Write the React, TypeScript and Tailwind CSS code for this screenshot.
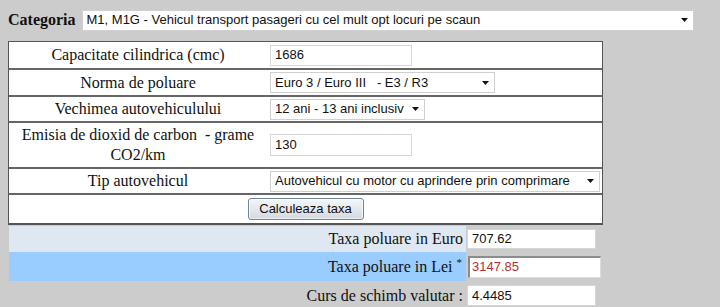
import React from "react";

const Arrow = () => (
  <svg width="7" height="4" viewBox="0 0 7 4" className="shrink-0">
    <path d="M0 0h7L3.5 4z" fill="#111" />
  </svg>
);

function Sel({ cls, text }: { cls: string; text: string }) {
  return (
    <div
      className={
        cls +
        " h-[21px] bg-white border border-[#d0d0d0] flex items-center justify-between pl-[4px] pr-[5px] font-['Liberation_Sans',Arial,sans-serif] text-[13px] text-[#111] whitespace-pre"
      }
    >
      <span>{text}</span>
      <Arrow />
    </div>
  );
}

function Inp({ cls, text }: { cls: string; text: string }) {
  return (
    <div
      className={
        cls +
        " bg-white border border-[#d6d6d6] flex items-center pl-[4px] font-['Liberation_Sans',Arial,sans-serif] text-[13px] text-[#111]"
      }
    >
      {text}
    </div>
  );
}

function Row({
  h,
  label,
  children,
}: {
  h: string;
  label: React.ReactNode;
  children: React.ReactNode;
}) {
  return (
    <div className={h + " flex items-center border-b-2 border-[#666]"}>
      <div className="w-[258px] text-center leading-[20px]">{label}</div>
      <div className="pl-[3px] flex items-center">{children}</div>
    </div>
  );
}

export default function App() {
  return (
    <div className="w-[720px] h-[307px] bg-[#cccccc] overflow-hidden font-['Liberation_Serif','Times_New_Roman',serif] text-[16px] text-[#111]">
      <div className="flex items-center pt-[8px] pl-[8px]">
        <span className="font-bold text-[16px]">Categoria</span>
        <Sel
          cls="ml-[6px] w-[612px]"
          text="M1, M1G - Vehicul transport pasageri cu cel mult opt locuri pe scaun"
        />
      </div>

      <div className="ml-[8px] mt-[9px] w-[595px] bg-white border border-[#555] border-b-2">
        <Row h="h-[28px]" label="Capacitate cilindrica (cmc)">
          <Inp cls="w-[142px] h-[21px]" text="1686" />
        </Row>
        <Row h="h-[27px]" label="Norma de poluare">
          <Sel cls="w-[225px]" text="Euro 3 / Euro III   - E3 / R3" />
        </Row>
        <Row h="h-[26px]" label="Vechimea autovehiculului">
          <Sel cls="w-[155px]" text="12 ani - 13 ani inclusiv" />
        </Row>
        <Row
          h="h-[46px]"
          label={
            <>
              Emisia de dioxid de carbon{"\u00a0"} - grame CO2/km
            </>
          }
        >
          <Inp cls="w-[142px] h-[22px]" text="130" />
        </Row>
        <Row h="h-[26px]" label="Tip autovehicul">
          <Sel cls="w-[330px]" text="Autovehicul cu motor cu aprindere prin comprimare" />
        </Row>
        <div className="h-[28px] flex items-center justify-center">
          <button className="h-[22px] w-[116px] rounded-[3px] border border-[#6f8599] bg-gradient-to-b from-[#f5f7f9] to-[#d3dae1] font-['Liberation_Sans',Arial,sans-serif] text-[13px] text-[#111] shadow-[inset_0_0_0_1px_rgba(255,255,255,0.6)]">
            Calculeaza taxa
          </button>
        </div>
      </div>

      <div className="mt-[1px] flex flex-col">
        <div className="flex h-[26px] items-center">
          <div className="ml-[9px] w-[457px] h-full bg-[#dfe8f2] flex items-center justify-end pr-[3px]">
            Taxa poluare in Euro
          </div>
          <Inp cls="ml-[1px] w-[129px] h-[20px]" text="707.62" />
        </div>
        <div className="flex h-[29px] items-center">
          <div className="ml-[9px] w-[457px] h-full bg-[#99ccff] flex items-center justify-end pr-[4px]">
            <span>
              Taxa poluare in Lei <sup className="text-[11px]">*</sup>
            </span>
          </div>
          <div className="ml-[2px] w-[133px] h-[22px] bg-white border-t-2 border-l-2 border-t-[#8c8c8c] border-l-[#8c8c8c] border-r border-b border-r-[#dcdcdc] border-b-[#dcdcdc] flex items-center pl-[2px] font-['Liberation_Sans',Arial,sans-serif] text-[13px] text-[#b03232]">
            3147.85
          </div>
        </div>
        <div className="flex h-[29px] items-center">
          <div className="ml-[9px] w-[457px] h-full flex items-center justify-end pr-[3px]">
            Curs de schimb valutar :
          </div>
          <Inp cls="ml-[1px] w-[129px] h-[21px]" text="4.4485" />
        </div>
      </div>
    </div>
  );
}
